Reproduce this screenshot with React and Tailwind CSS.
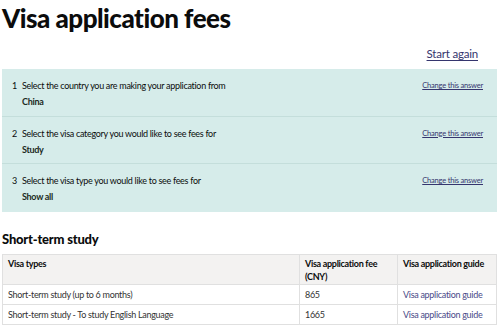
import React from "react";

const questions = [
  { n: 1, q: "Select the country you are making your application from", a: "China" },
  { n: 2, q: "Select the visa category you would like to see fees for", a: "Study" },
  { n: 3, q: "Select the visa type you would like to see fees for", a: "Show all" },
];

const rows = [
  { type: "Short-term study (up to 6 months)", fee: "865" },
  { type: "Short-term study - To study English Language", fee: "1665" },
];

export default function App() {
  return (
    <div className="w-[500px] h-[330px] overflow-hidden bg-white text-[#0b0c0c] font-['Lato',sans-serif]">
      {/* Title */}
      <h1 className="px-[2px] pt-[1px] text-[26px] leading-[34px] font-black tracking-[-0.5px]">
        Visa application fees
      </h1>

      <div className="flex justify-end pr-[22px] mt-[11px]">
        <a className="text-[11.5px] leading-[16px] tracking-[-0.2px] text-[#35356e] underline underline-offset-2">
          Start again
        </a>
      </div>

      {/* Answers */}
      <div className="mx-[2px] mt-[7px] w-[495px] bg-[#d6ecea]">
        {questions.map((item, i) => (
          <div
            key={item.n}
            className={`flex h-[47.6px] pl-[10px] pr-[14px] pt-[10px] ${i < 2 ? "border-b border-[#c4dedb]" : ""}`}
          >
            <div className="flex-1 text-[9px] leading-[13px] tracking-[-0.3px]">
              <div>
                <span className="mr-[5px]">{item.n}</span>
                {item.q}
              </div>
              <div className="mt-[3px] pl-[10px] font-bold text-[#1b2a22]">{item.a}</div>
            </div>
            <a className="mt-[1px] text-[7.5px] leading-[12px] tracking-[-0.2px] text-[#35356e] underline">
              Change this answer
            </a>
          </div>
        ))}
      </div>

      {/* Section */}
      <h2 className="px-[2px] mt-[17px] text-[13px] leading-[20px] font-black tracking-[-0.2px]">Short-term study</h2>

      <table className="mx-[2px] mt-[5px] w-[495px] table-fixed border-collapse text-[9px] leading-[13px] tracking-[-0.3px]">
        <thead>
          <tr className="bg-[#f3f2f1] h-[30px] align-top">
            <th className="w-[297px] border border-[#e0e0e0] px-[5px] pt-[2px] text-left font-bold">Visa types</th>
            <th className="w-[98px] border border-[#e0e0e0] px-[5px] pt-[2px] text-left font-bold">
              Visa application fee
              <br />
              (CNY)
            </th>
            <th className="border border-[#e0e0e0] px-[5px] pt-[2px] text-left font-bold whitespace-nowrap">Visa application guide</th>
          </tr>
        </thead>
        <tbody>
          {rows.map((r) => (
            <tr key={r.fee} className="h-[20px]">
              <td className="border border-[#e0e0e0] px-[5px] text-[#333333]">{r.type}</td>
              <td className="border border-[#e0e0e0] px-[5px] text-[#333333]">{r.fee}</td>
              <td className="border border-[#e0e0e0] px-[5px] text-[#4a4a88] whitespace-nowrap">Visa application guide</td>
            </tr>
          ))}
        </tbody>
      </table>
    </div>
  );
}
